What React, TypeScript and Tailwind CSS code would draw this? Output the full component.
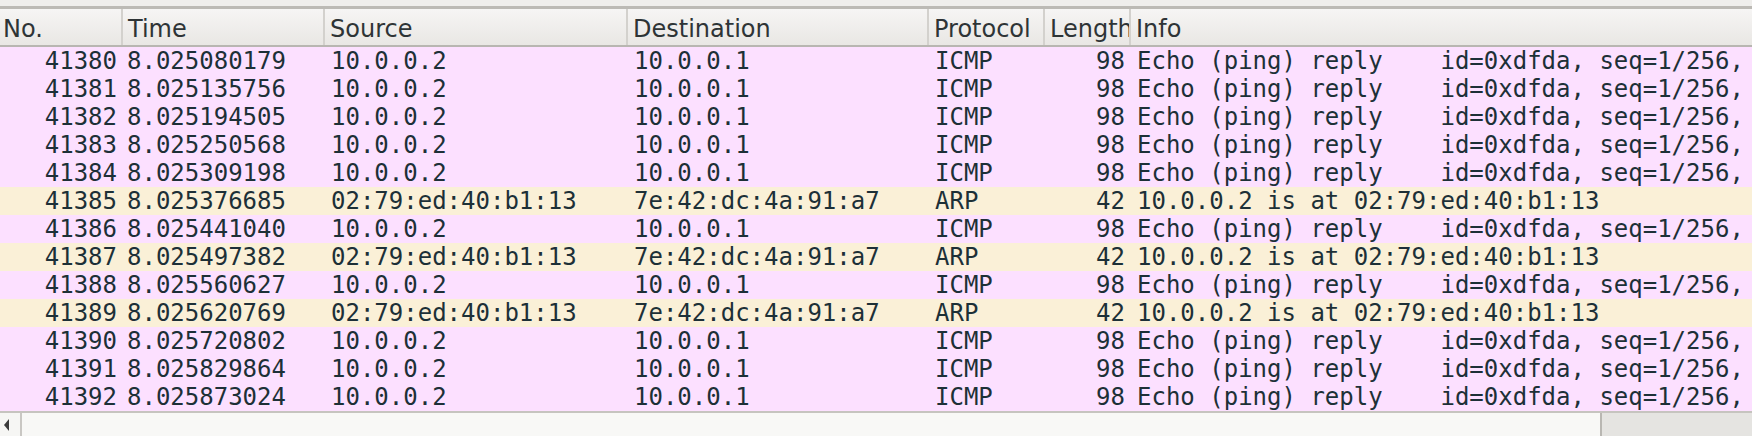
import React from 'react';

type Packet = {
  no: number;
  time: string;
  src: string;
  dst: string;
  proto: 'ICMP' | 'ARP';
  len: number;
  info: string;
};

const ECHO = 'Echo (ping) reply    id=0xdfda, seq=1/256, ttl=64 (request in 41379)';
const ARP_INFO = '10.0.0.2 is at 02:79:ed:40:b1:13';

const icmp = (no: number, time: string): Packet => ({
  no,
  time,
  src: '10.0.0.2',
  dst: '10.0.0.1',
  proto: 'ICMP',
  len: 98,
  info: ECHO,
});

const arp = (no: number, time: string): Packet => ({
  no,
  time,
  src: '02:79:ed:40:b1:13',
  dst: '7e:42:dc:4a:91:a7',
  proto: 'ARP',
  len: 42,
  info: ARP_INFO,
});

const packets: Packet[] = [
  icmp(41380, '8.025080179'),
  icmp(41381, '8.025135756'),
  icmp(41382, '8.025194505'),
  icmp(41383, '8.025250568'),
  icmp(41384, '8.025309198'),
  arp(41385, '8.025376685'),
  icmp(41386, '8.025441040'),
  arp(41387, '8.025497382'),
  icmp(41388, '8.025560627'),
  arp(41389, '8.025620769'),
  icmp(41390, '8.025720802'),
  icmp(41391, '8.025829864'),
  icmp(41392, '8.025873024'),
];

const cols = 'grid grid-cols-[123px_202px_303px_301px_116px_86px_1fr]';

const headers = ['No.', 'Time', 'Source', 'Destination', 'Protocol', 'Length', 'Info'];

const App: React.FC = () => {
  return (
    <div className="w-[1752px] h-[436px] overflow-hidden bg-[#efeeec] flex flex-col">
      {/* top strip */}
      <div className="h-[6px] bg-[#efeeec]" />
      <div className="h-[3px] bg-[#bcbab5]" />

      {/* column header */}
      <div
        className={`${cols} h-[38px] bg-gradient-to-b from-[#f6f5f4] to-[#e9e7e4] border-b-2 border-[#b8b6b1] text-[24px] text-[#2e3436]`}
        style={{ fontFamily: '"DejaVu Sans", sans-serif' }}
      >
        {headers.map((h, i) => (
          <div
            key={h}
            className={`flex items-center pt-[3px] overflow-hidden whitespace-nowrap ${
              i === 0 ? 'pl-[3px]' : 'pl-[5px]'
            } ${i < headers.length - 1 ? 'border-r-2 border-[#d3d1cd]' : ''}`}
          >
            {h}
          </div>
        ))}
      </div>

      {/* packet list */}
      <div
        className="flex-1 overflow-hidden text-[24px] leading-[28px] text-[#1d3037]"
        style={{ fontFamily: '"DejaVu Sans Mono", monospace' }}
      >
        {packets.map((p) => (
          <div
            key={p.no}
            className={`${cols} h-[28px] whitespace-pre ${
              p.proto === 'ARP' ? 'bg-[#faf0d7]' : 'bg-[#fce0ff]'
            }`}
          >
            <div className="text-right pr-[6px] overflow-hidden">{p.no}</div>
            <div className="pl-[4px] overflow-hidden">{p.time}</div>
            <div className="pl-[6px] overflow-hidden">{p.src}</div>
            <div className="pl-[6px] overflow-hidden">{p.dst}</div>
            <div className="pl-[6px] overflow-hidden">{p.proto}</div>
            <div className="text-right pr-[6px] overflow-hidden">{p.len}</div>
            <div className="pl-[6px] overflow-hidden">{p.info}</div>
          </div>
        ))}
      </div>

      {/* horizontal scrollbar */}
      <div className="h-[25px] border-t-2 border-[#c6c4bf] flex bg-[#f6f6f4]">
        <div className="w-[22px] flex items-center justify-start pl-[4px] border-r-2 border-[#c9c7c3]">
          <div className="w-0 h-0 border-y-[6px] border-y-transparent border-r-[5px] border-r-[#3c3c3c]" />
        </div>
        <div className="w-[1578px] bg-[#f8f8f6]" />
        <div className="flex-1 border-l-2 border-[#b9b7b2] bg-[#e5e4e1]" />
      </div>
    </div>
  );
};

export default App;
